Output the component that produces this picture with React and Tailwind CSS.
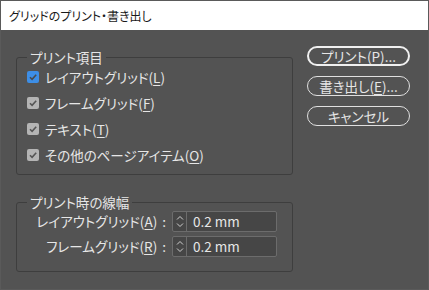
import React from "react";

const font = {
  fontFamily: '"Noto Sans CJK JP", "Noto Sans", sans-serif',
};

function Check({ blue }) {
  return (
    <span
      className={`flex h-[12px] w-[12px] shrink-0 items-center justify-center rounded-[2px] ${
        blue ? "bg-[#3d8ee6]" : "bg-[#b4b4b4]"
      }`}
    >
      <svg width="10" height="10" viewBox="0 0 10 10">
        <path
          d="M2 5.2 L4.1 7.3 L8.2 2.8"
          fill="none"
          stroke={blue ? "#4a4a4a" : "#555555"}
          strokeWidth="1.6"
        />
      </svg>
    </span>
  );
}

function Mn({ children }) {
  return <span className="underline underline-offset-[2px] decoration-[1px]">{children}</span>;
}

function CheckRow({ blue, label, m }) {
  return (
    <div className="flex h-[20px] items-center gap-[6px]">
      <Check blue={blue} />
      <span>
        {label}(<Mn>{m}</Mn>)
      </span>
    </div>
  );
}

function Spinner({ label, m }) {
  return (
    <div className="flex h-[21px] items-center gap-[6px]">
      <span className="w-[139px] whitespace-nowrap text-right">
        {label}(<Mn>{m}</Mn>)<span className="ml-[5px]">:</span>
      </span>
      <div className="flex h-[21px] w-[105px] items-stretch rounded-[2px] border border-[#6c6c6c] bg-[#464646]">
        <div className="flex w-[14px] items-center justify-center border-r border-[#6c6c6c]">
          <svg width="10" height="17" viewBox="0 0 10 17">
            <path d="M2 6.5 L5 3.5 L8 6.5" fill="none" stroke="#cfcfcf" strokeWidth="1" />
            <path d="M2 10.5 L5 13.5 L8 10.5" fill="none" stroke="#cfcfcf" strokeWidth="1" />
          </svg>
        </div>
        <span className="flex items-center pl-[6px]">0.2 mm</span>
      </div>
    </div>
  );
}

function Btn({ children, def }) {
  return (
    <div
      className={`flex h-[20px] w-[103px] items-center justify-center rounded-full ${
        def ? "border-2 border-[#f0f0f0]" : "border border-[#e0e0e0]"
      }`}
    >
      {children}
    </div>
  );
}

export default function App() {
  return (
    <div
      className="flex h-[290px] w-[429px] flex-col border border-[#5a5a5a] bg-[#535353] text-[13.5px] text-[#e6e6e6] [font-feature-settings:'palt']"
      style={font}
    >
      <div className="flex h-[29px] items-center bg-white pl-[8px] text-[12px] text-[#1a1a1a]">
        グリッドのプリント・書き出し
      </div>
      <div className="flex flex-1 pl-[15px]">
        <div className="flex w-[277px] flex-col">
          <fieldset className="mt-[18px] rounded-[3px] border border-[#3e3e3e] pb-[9px] pl-[10px]">
            <legend className="px-[3px] leading-[18px]">プリント項目</legend>
            <div className="flex flex-col gap-[6px] pt-[1px]">
              <CheckRow blue label="レイアウトグリッド" m="L" />
              <CheckRow label="フレームグリッド" m="F" />
              <CheckRow label="テキスト" m="T" />
              <CheckRow label="その他のページアイテム" m="O" />
            </div>
          </fieldset>
          <fieldset className="mt-[18px] rounded-[3px] border border-[#3e3e3e] pb-[14px] pl-[10px]">
            <legend className="px-[3px] leading-[18px]">プリント時の線幅</legend>
            <div className="flex flex-col gap-[4px]">
              <Spinner label="レイアウトグリッド" m="A" />
              <Spinner label="フレームグリッド" m="R" />
            </div>
          </fieldset>
        </div>
        <div className="ml-[14px] mt-[16px] flex flex-col gap-[10px]">
          <Btn def>
            プリント(<Mn>P</Mn>)...
          </Btn>
          <Btn>
            書き出し(<Mn>E</Mn>)...
          </Btn>
          <Btn>キャンセル</Btn>
        </div>
      </div>
    </div>
  );
}
